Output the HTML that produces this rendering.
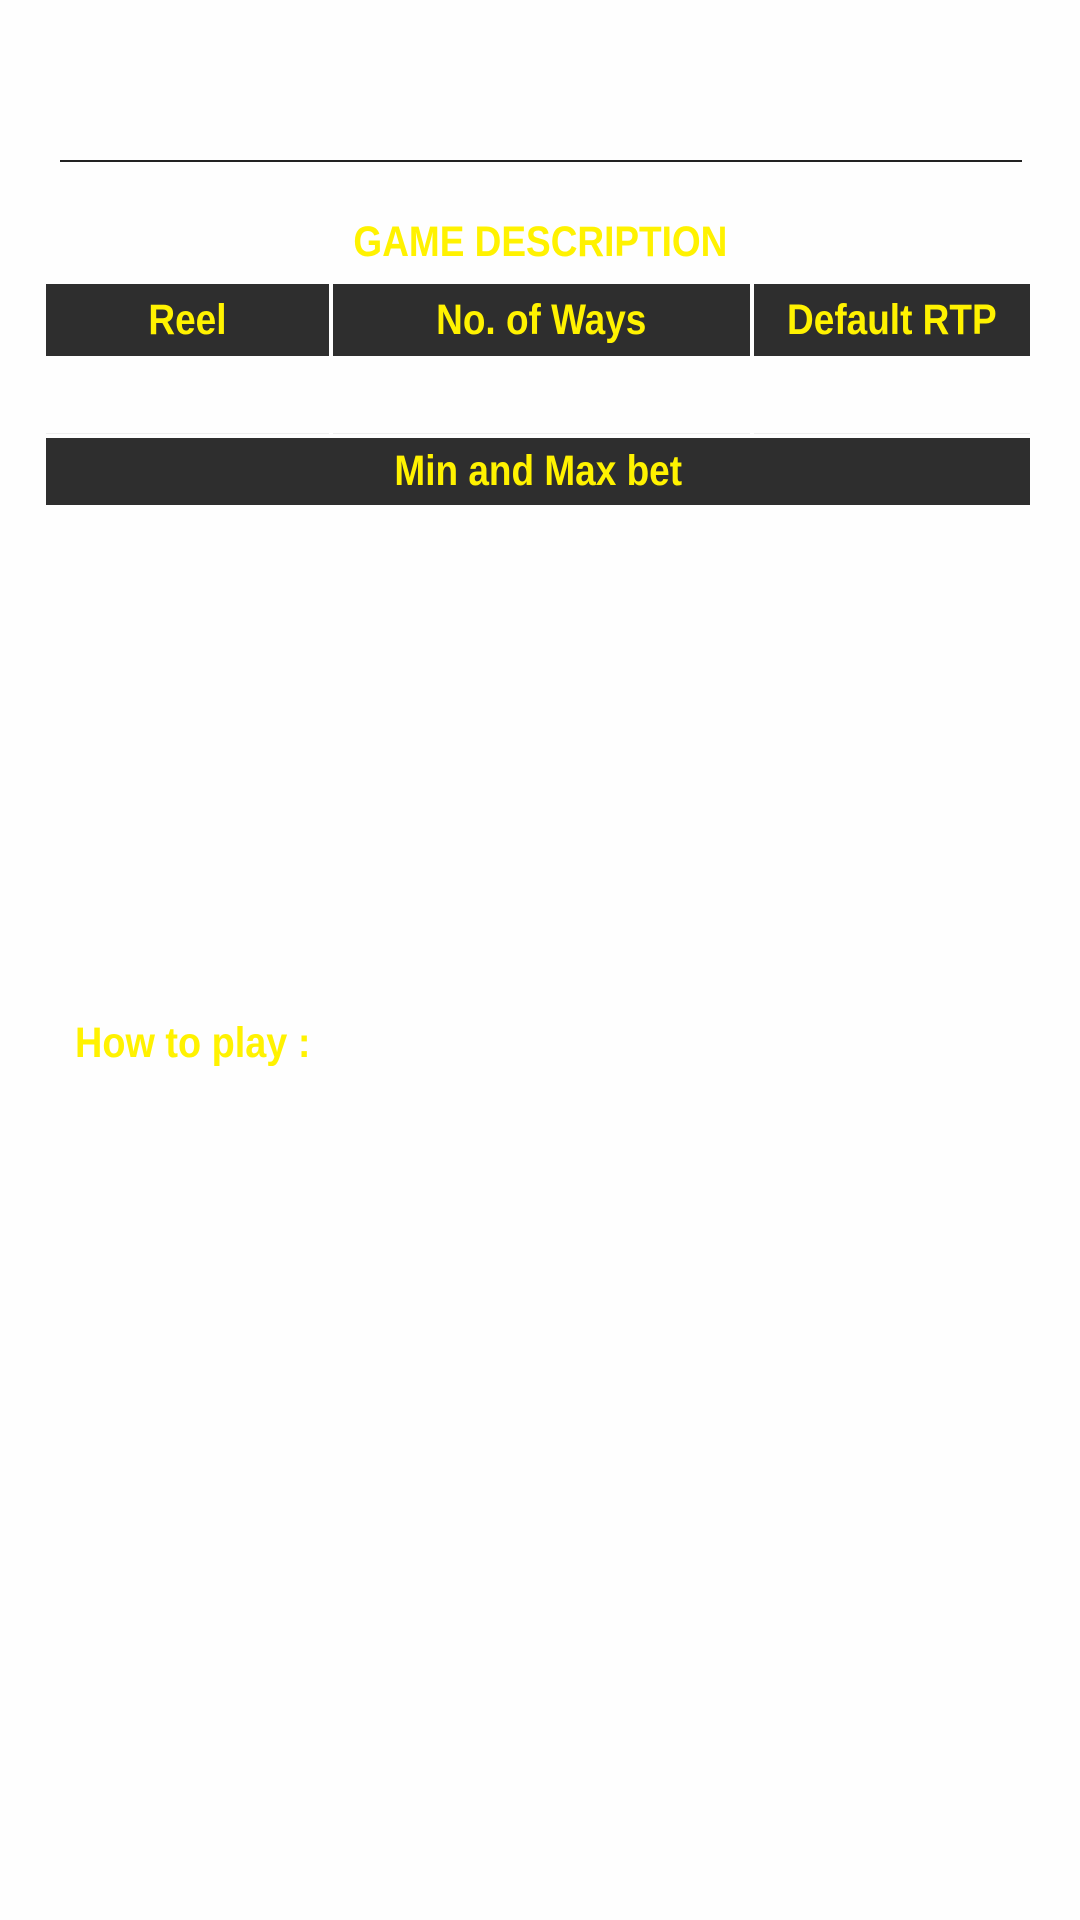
<!DOCTYPE html>
<html><head><meta charset="utf-8"><style>
html,body{margin:0;padding:0;background:#fefefe;width:1080px;height:1920px;overflow:hidden;font-family:"Liberation Sans",sans-serif;}
.a{position:absolute}
.box{position:absolute;background:#2e2e2e;display:flex;align-items:center;justify-content:center;}
.t{color:#fff200;display:inline-block;transform:scaleX(0.86);white-space:nowrap;}
.b{font-weight:bold;font-size:43px;}
</style></head><body>
<div class="a" style="left:60px;top:160px;width:962px;height:2px;background:#222"></div>
<div class="a" style="left:0;width:1080px;top:215px;text-align:center;line-height:54px"><span class="t" style="font-size:43px;font-weight:bold;transform:scaleX(0.86)">GAME DESCRIPTION</span></div>
<div class="box" style="left:46px;top:284px;width:283px;height:72px"><span class="t b">Reel</span></div>
<div class="box" style="left:333px;top:284px;width:417px;height:72px"><span class="t b">No. of Ways</span></div>
<div class="box" style="left:754px;top:284px;width:276px;height:72px"><span class="t b">Default RTP</span></div>
<div class="a" style="left:46px;top:433px;width:283px;height:1px;background:#eee"></div>
<div class="a" style="left:333px;top:433px;width:417px;height:1px;background:#eee"></div>
<div class="a" style="left:754px;top:433px;width:276px;height:1px;background:#eee"></div>
<div class="box" style="left:46px;top:438px;width:984px;height:67px"><span class="t b">Min and Max bet</span></div>
<div class="a" style="left:75px;top:1016px;line-height:54px;transform-origin:0 0;transform:scaleX(0.88)"><span style="color:#fff200;font-size:43px;font-weight:bold;white-space:nowrap">How to play :</span></div>
</body></html>
